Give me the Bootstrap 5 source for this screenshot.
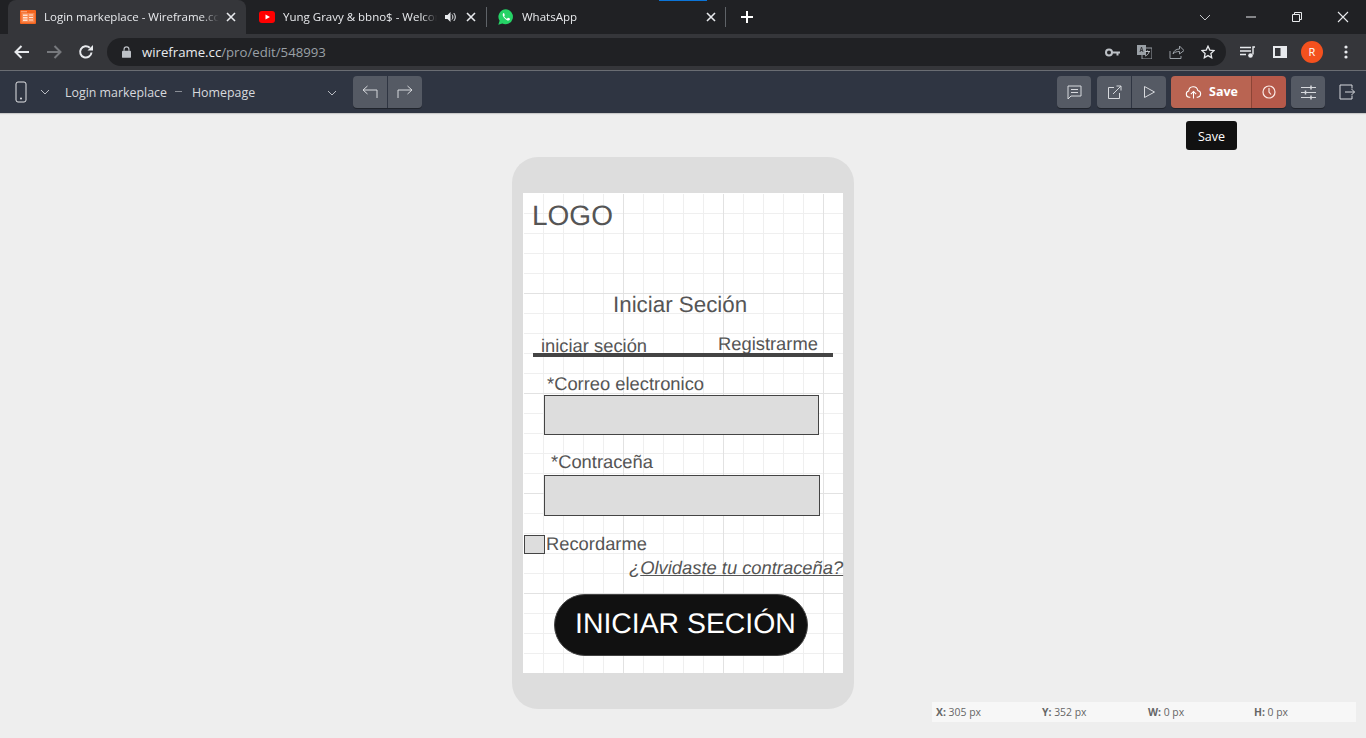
<!DOCTYPE html>
<html lang="en">
<head>
    <meta charset="UTF-8">
    <title>Login markeplace - Wireframe.cc</title>
    <link rel="stylesheet" href="https://cdn.jsdelivr.net/npm/bootstrap@5.3.0/dist/css/bootstrap.min.css">
    <style>
        html, body { height: 100%; overflow: hidden; }
        body { background: #eeeeee; font-family: "Open Sans", "Noto Sans", sans-serif; }
        .page-wrap { height: 738px; }

        /* browser chrome */
        .tab-strip { height: 34px; background: #202124; color: #e8eaed; font-size: 11.5px; padding-left: 8px; position: relative; }
        .tab-strip::after { content: ""; position: absolute; left: 659px; top: 0; width: 48px; height: 1px; background: #0b74d8; }
        .br-tab { height: 34px; display: flex; align-items: center; white-space: nowrap; }
        .br-tab.active-tab { width: 238px; background: #35363a; border-radius: 8px 8px 0 0; padding-left: 12px; }
        .br-tab.second-tab { width: 240px; padding-left: 13px; }
        .br-tab.third-tab { width: 238px; padding-left: 11px; }
        .tab-title { overflow: hidden; margin-left: 8px; width: 175px; -webkit-mask-image: linear-gradient(90deg, #000 90%, transparent); mask-image: linear-gradient(90deg, #000 90%, transparent); }
        .second-tab .tab-title { width: 154px; }
        .third-tab .tab-title { width: 177px; }
        .tab-sep { width: 1px; height: 20px; background: #5f6368; flex: none; }
        .tab-close { flex: none; margin-left: 7px; display: block; }
        .win-btns { margin-left: auto; width: 184px; display: flex; align-items: center; height: 100%; }
        .win-btns svg { width: 46px; flex: none; }

        .addr-bar { height: 36px; background: #35363a; padding: 0 0 0 14px; }
        .addr-pill { height: 28px; width: 1119px; margin-left: 13px; background: #202124; border-radius: 14px; padding-left: 15px; font-size: 13.2px; color: #9aa0a6; }
        .addr-pill b { font-weight: 400; color: #e8eaed; }
        .addr-text { padding-top: 1px; }
        .addr-icons { margin-left: auto; gap: 17px; padding-right: 11px; }
        .avatar-dot { width: 22px; height: 22px; border-radius: 50%; background: #f4511e; color: #fff; font-size: 11px; line-height: 22px; text-align: center; }

        /* wireframe toolbar */
        .wf-toolbar { height: 43px; background: #2f3542; border-top: 1px solid #6a6d73; color: #d7d9dd; font-size: 12.4px; padding: 5px 0 0 13px; box-shadow: 0 1px 1px #c9c9c9; }
        .doc-names { margin-left: 15px; height: 32px; width: 272px; padding-top: 2px; }
        .tool-btn { height: 32px; background: #555a64; border-radius: 4px; display: flex; align-items: center; justify-content: center; box-shadow: 0 1px 0 #20242c; }
        .tool-btn.w34 { width: 34px; }
        .btn-left { border-radius: 4px 0 0 4px; border-right: 1px solid #2f3542; }
        .btn-right { border-radius: 0 4px 4px 0; }
        .save-main { width: 81px; background: #b96452; border-radius: 4px 0 0 4px; border-right: 1px solid #8c4436; color: #fff; font-weight: 700; gap: 7px; font-size: 12.5px; padding-left: 1px; }
        .save-clock { width: 34px; background: #b5594a; border-radius: 0 4px 4px 0; }
        .dash-mark { width: 7px; height: 1px; background: #8a8e96; margin: 0 10px 4px 8px; }

        .save-tip { position: absolute; left: 1186px; top: 121px; width: 51px; height: 29px; background: #111; color: #fff; border-radius: 3px; font-size: 12.5px; line-height: 31px; text-align: center; }

        /* phone on the canvas */
        .canvas-area { position: relative; }
        .phone-shell { position: absolute; left: 512px; top: 157px; width: 342px; height: 552px; background: #dddddd; border-radius: 26px; }
        .phone-screen {
            position: absolute; left: 11px; top: 36px; width: 320px; height: 480px;
            background-color: #fff;
            color: #555;
            font-family: "Liberation Sans", Arial, sans-serif;
            text-rendering: geometricPrecision;
        }
        .phone-screen::before {
            content: ""; position: absolute; left: 1px; top: 1px; right: 0; bottom: 0;
            background-image:
                linear-gradient(90deg, #e2e2e2 1px, transparent 1px),
                linear-gradient(#e2e2e2 1px, transparent 1px),
                linear-gradient(90deg, #efefef 1px, transparent 1px),
                linear-gradient(#efefef 1px, transparent 1px);
            background-size: 100px 100%, 100% 100px, 20px 100%, 100% 20px;
            background-position: -1px 0, 0 -1px, -1px 0, 0 -1px;
        }
        .wf-item { position: absolute; white-space: nowrap; line-height: 1.15; font-size: 18.35px; }
        .wf-box { position: absolute; background: #dddddd; border: 1px solid #444; }
        .wf-rule { position: absolute; background: #444; height: 4px; left: 10px; width: 300px; top: 160px; }
        .wf-cta { position: absolute; left: 31px; top: 401px; width: 254px; height: 62px; background: #111; border: 1px solid #444; border-radius: 31px; color: #fff; font-size: 28.4px; line-height: 58px; padding-left: 20px; white-space: nowrap; }

        .coord-bar { position: absolute; left: 932px; top: 702px; width: 424px; height: 20px; background: #f7f7f7; color: #666; font-size: 10.4px; line-height: 20px; display: flex; padding-left: 4px; }
        .coord-bar span { flex: 0 0 106px; }
    </style>
</head>
<body>
<div class="page-wrap d-flex flex-column">
    <!-- Browser tabs -->
    <div class="tab-strip d-flex align-items-center">
        <div class="br-tab active-tab">
            <svg width="16" height="14" viewBox="0 0 16 14"><rect width="16" height="14" rx="1" fill="#f4651f"/><path d="M1.500 1.200h1v1h-1zM3.500 1.200h1v1h-1zM5.500 1.200h1v1h-1z" fill="#fff"/><rect x="1.500" y="3" width="13" height="9.500" fill="#f98a52"/><path d="M3 4.500h4.500v1.500H3zM3 7h4.500v1.500H3zM3 9.500h4.500V11H3zM9 4.500h4v1H9zM9 7h4v1H9zM9 9.500h4v1H9z" fill="#ffe2d2"/></svg>
            <span class="tab-title">Login markeplace - Wireframe.cc</span>
            <svg class="tab-close" width="10" height="10" viewBox="0 0 10 10"><path d="M1 1l8 8M9 1l-8 8" stroke="#e8eaed" stroke-width="1.600"/></svg>
        </div>
        <div class="br-tab second-tab">
            <svg width="16" height="12" viewBox="0 0 16 12"><rect width="16" height="12" rx="3" fill="#f00"/><path d="M6.500 3.500v5L11 6z" fill="#fff"/></svg>
            <span class="tab-title">Yung Gravy &amp; bbno$ - Welcome</span>
            <svg class="ms-2" width="11" height="10" viewBox="0 0 11 10"><path d="M0 3h2.500L5.500 0v10L2.500 7H0z" fill="#e8eaed"/><path d="M7 2.500c1.200 1.400 1.200 3.600 0 5M8.800 1c2 2.300 2 5.700 0 8" stroke="#e8eaed" fill="none"/></svg>
            <svg class="tab-close" style="margin-left:10px" width="10" height="10" viewBox="0 0 10 10"><path d="M1 1l8 8M9 1l-8 8" stroke="#e8eaed" stroke-width="1.600"/></svg>
        </div>
        <span class="tab-sep"></span>
        <div class="br-tab third-tab">
            <svg width="16" height="16" viewBox="0 0 16 16"><path d="M8 .300A7.500 7.500 0 0 0 1.600 11.800L.300 15.700l4-1.100A7.500 7.500 0 1 0 8 .3z" fill="#25d366"/><path d="M5.600 4c-.8.500-1.100 1.500-.8 2.600.6 2 2.500 4 4.700 4.800 1.100.3 2-.1 2.400-.9.200-.5.100-.8-.1-.9l-1.500-.8c-.3-.1-.5 0-.6.200l-.5.600c-.2.200-.4.200-.7.100-.9-.4-1.800-1.200-2.300-2.200-.1-.2 0-.4.100-.6l.4-.5c.1-.2.100-.4 0-.6L6.100 4.200c-.1-.3-.3-.3-.5-.2z" fill="#fff"/></svg>
            <span class="tab-title">WhatsApp</span>
            <svg class="tab-close" width="10" height="10" viewBox="0 0 10 10"><path d="M1 1l8 8M9 1l-8 8" stroke="#e8eaed" stroke-width="1.600"/></svg>
        </div>
        <span class="tab-sep"></span>
        <svg style="margin-left:15px" width="12" height="12" viewBox="0 0 12 12"><path d="M6 0v12M0 6h12" stroke="#fff" stroke-width="2"/></svg>
        <div class="win-btns">
            <svg height="12" viewBox="0 0 46 12"><path d="M18 4l5 5 5-5" stroke="#c4c7cc" fill="none"/></svg>
            <svg height="12" viewBox="0 0 46 12"><path d="M18 6h10" stroke="#e8eaed"/></svg>
            <svg height="12" viewBox="0 0 46 12"><path d="M18.500 3.500h7v7h-7zM20.500 3.500v-2h7v7h-2" stroke="#e8eaed" fill="none"/></svg>
            <svg height="12" viewBox="0 0 46 12"><path d="M18 1l10 10M28 1L18 11" stroke="#e8eaed" stroke-width="1.100"/></svg>
        </div>
    </div>

    <!-- Address bar -->
    <div class="addr-bar d-flex align-items-center">
        <svg width="16" height="14" viewBox="0 0 16 14"><path d="M15 7H2M7.500 1L1.500 7l6 6" stroke="#e8eaed" stroke-width="2" fill="none"/></svg>
        <svg class="ms-3" width="16" height="14" viewBox="0 0 16 14"><path d="M1 7h13M8.500 1l6 6-6 6" stroke="#77797d" stroke-width="2" fill="none"/></svg>
        <svg class="ms-3" width="16" height="16" viewBox="0 0 16 16"><path d="M13.500 8.500A5.700 5.700 0 1 1 11.800 3.800" stroke="#e8eaed" stroke-width="2" fill="none"/><path d="M9.500 6.500H15V1z" fill="#e8eaed"/></svg>
        <div class="addr-pill d-flex align-items-center">
            <svg style="margin-right:11px" width="9" height="12" viewBox="0 0 10 13"><rect y="5" width="10" height="8" rx="1" fill="#bdc1c6"/><path d="M2.300 5V3.500a2.700 2.700 0 0 1 5.400 0V5" stroke="#bdc1c6" stroke-width="1.300" fill="none"/></svg>
            <span class="addr-text"><b>wireframe.cc</b>/pro/edit/548993</span>
            <div class="addr-icons d-flex align-items-center">
                <svg width="15" height="9" viewBox="0 0 15 9"><circle cx="4" cy="4.500" r="3" stroke="#bdc1c6" stroke-width="2" fill="none"/><path d="M7 3.500h8v2h-1.500v2h-2v-2H7z" fill="#bdc1c6"/></svg>
                <svg width="15" height="14" viewBox="0 0 15 14"><rect x="5" y="3" width="10" height="11" fill="none" stroke="#9aa0a6"/><rect width="9" height="10" fill="#9aa0a6"/><path d="M3 7l1.500-5L6 7M3.500 5.500h2" stroke="#35363a" fill="none"/><path d="M8 6.500h5M10.500 5.500v1M12 7c-.5 2-2 3.500-4 4" stroke="#bdc1c6" fill="none"/></svg>
                <svg width="15" height="14" viewBox="0 0 15 14"><path d="M1 6v7.500h11V11M4 9c.5-3 3-5 6.500-5V1L15 5.500 10.500 9V6.500C8 6.500 5.500 7 4 9z" stroke="#9aa0a6" fill="none"/></svg>
                <svg width="14" height="14" viewBox="0 0 14 14"><path d="M7 1.200l1.800 3.900 4.200.5-3.100 2.900.8 4.200L7 10.600l-3.700 2.100.8-4.200L1 5.600l4.200-.5z" stroke="#e8eaed" stroke-width="1.300" fill="none"/></svg>
            </div>
        </div>
        <div class="d-flex align-items-center ms-auto">
            <svg width="15" height="12" viewBox="0 0 15 12"><path d="M0 1.500h11M0 5h11M0 8.500h6" stroke="#e8eaed" stroke-width="1.400"/><path d="M13 8.500V1h2" stroke="#e8eaed" stroke-width="1.400" fill="none"/><circle cx="10.500" cy="9.500" r="2.300" fill="#e8eaed"/></svg>
            <svg style="margin-left:18px" width="14" height="12" viewBox="0 0 14 12"><rect width="14" height="12" fill="#e8eaed"/><rect x="2" y="2" width="5.500" height="8" fill="#35363a"/></svg>
            <div class="avatar-dot" style="margin-left:14px">R</div>
            <svg style="margin:0 18px 0 21px" width="4" height="14" viewBox="0 0 4 14"><circle cx="2" cy="2" r="1.600" fill="#e8eaed"/><circle cx="2" cy="7" r="1.600" fill="#e8eaed"/><circle cx="2" cy="12" r="1.600" fill="#e8eaed"/></svg>
        </div>
    </div>

    <!-- Wireframe.cc toolbar -->
    <div class="wf-toolbar d-flex align-items-start">
        <svg width="16" height="22" viewBox="0 0 16 22" style="margin-top:5px"><rect x="3" y="1" width="10" height="20" rx="2" stroke="#e3e4e6" fill="none"/><circle cx="8" cy="17.500" r="1" fill="#e3e4e6"/></svg>
        <svg style="margin:13px 0 0 11px" width="10" height="6" viewBox="0 0 10 6"><path d="M1 1l4 4 4-4" stroke="#b9bcc2" fill="none"/></svg>
        <div class="doc-names d-flex align-items-center">
            <span>Login markeplace</span><span class="dash-mark"></span><span>Homepage</span>
            <svg class="ms-auto" width="10" height="6" viewBox="0 0 10 6"><path d="M1 1l4 4 4-4" stroke="#b9bcc2" fill="none"/></svg>
        </div>
        <div class="d-flex" style="margin-left:16px">
            <div class="tool-btn btn-left" style="width:35px"><svg width="16" height="14" viewBox="0 0 16 14"><path d="M5.500 1L1 5l4.500 4M1 5h14v8" stroke="#d7d9dd" fill="none"/></svg></div>
            <div class="tool-btn btn-right" style="width:34px"><svg width="16" height="14" viewBox="0 0 16 14"><path d="M10.500 1L15 5l-4.500 4M15 5H1v8" stroke="#d7d9dd" fill="none"/></svg></div>
        </div>
        <div class="d-flex ms-auto">
            <div class="tool-btn w34"><svg width="15" height="15" viewBox="0 0 15 15"><path d="M1 1h13v10H4l-3 3zM4 4.500h7M4 7.500h7" stroke="#d7d9dd" fill="none"/></svg></div>
            <div class="d-flex" style="margin-left:6px">
                <div class="tool-btn btn-left" style="width:35px"><svg width="15" height="15" viewBox="0 0 15 15"><path d="M7 2.500H1.500v11h11V8M6 9l8-8M9.500 1H14v4.500" stroke="#d7d9dd" fill="none"/></svg></div>
                <div class="tool-btn btn-right" style="width:34px"><svg width="13" height="14" viewBox="0 0 13 14"><path d="M1.500 1.500v11l10-5.500z" stroke="#d7d9dd" fill="none"/></svg></div>
            </div>
            <div class="d-flex" style="margin-left:5px">
                <div class="tool-btn save-main"><svg width="17" height="14" viewBox="0 0 16 13"><path d="M5 11.500H4A3 3 0 0 1 3.500 5.600 4.300 4.300 0 0 1 12 5a3.300 3.300 0 0 1 0 6.500h-1M8 12.500V6.500M5.500 8.500L8 6l2.500 2.500" stroke="#fff" fill="none"/></svg><span>Save</span></div>
                <div class="tool-btn save-clock"><svg width="14" height="14" viewBox="0 0 14 14"><circle cx="7" cy="7" r="6" stroke="#fbe9e5" stroke-width="1.200" fill="none"/><path d="M7 3v4l2 2.500" stroke="#fbe9e5" stroke-width="1.200" fill="none"/></svg></div>
            </div>
            <div class="tool-btn w34" style="margin-left:5px"><svg width="15" height="15" viewBox="0 0 15 15"><path d="M0 2.500h15M0 7.500h15M0 12.500h15" stroke="#d7d9dd"/><path d="M10 .5v4M4.500 5.500v4M10 10.500v4" stroke="#d7d9dd" stroke-width="1.500"/></svg></div>
            <div class="d-flex align-items-center justify-content-center" style="width:41px;height:32px;padding-left:2px"><svg width="16" height="16" viewBox="0 0 16 16"><path d="M13 4.500V1H1v14h12v-3.500M6 8h9.500M12.500 5l3 3-3 3" stroke="#d7d9dd" fill="none"/></svg></div>
        </div>
    </div>

    <!-- Canvas -->
    <div class="canvas-area flex-grow-1"></div>
</div>

<div class="save-tip">Save</div>

<div class="phone-shell">
    <div class="phone-screen">
        <div class="wf-item" style="left:9px;top:7px;font-size:28px">LOGO</div>
        <div class="wf-item" style="left:90px;top:99px;font-size:22.35px">Iniciar Seción</div>
        <div class="wf-item" style="left:18px;top:142px">iniciar seción</div>
        <div class="wf-item" style="left:195px;top:140px">Registrarme</div>
        <div class="wf-rule"></div>
        <div class="wf-item" style="left:24px;top:180px">*Correo electronico</div>
        <div class="wf-box" style="left:21px;top:202px;width:275px;height:40px"></div>
        <div class="wf-item" style="left:28px;top:258px">*Contraceña</div>
        <div class="wf-box" style="left:21px;top:282px;width:276px;height:41px"></div>
        <div class="wf-box" style="left:1px;top:342px;width:21px;height:19px"></div>
        <div class="wf-item" style="left:23px;top:340px">Recordarme</div>
        <div class="wf-item" style="left:106px;top:364px;font-style:italic">¿<u>Olvidaste tu contraceña?</u></div>
        <div class="wf-cta">INICIAR SECIÓN</div>
    </div>
</div>

<div class="coord-bar">
    <span><b>X:</b> 305 px</span>
    <span><b>Y:</b> 352 px</span>
    <span><b>W:</b> 0 px</span>
    <span><b>H:</b> 0 px</span>
</div>
<script src="https://cdn.jsdelivr.net/npm/bootstrap@5.3.0/dist/js/bootstrap.bundle.min.js"></script>
</body>
</html>
